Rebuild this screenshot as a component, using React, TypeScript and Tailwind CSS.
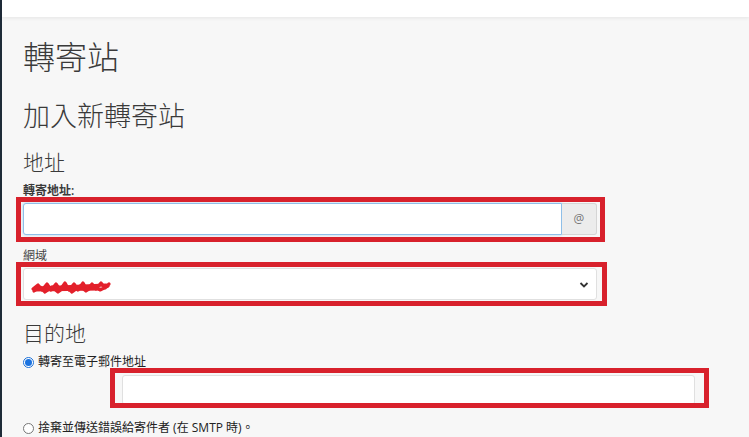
import React from "react";

const cjk = { fontFamily: '"Open Sans", "Noto Sans CJK TC", sans-serif' };

const RedBox = ({ className }: { className: string }) => (
  <div className={`pointer-events-none absolute border-[5px] border-[#d8212c] ${className}`} />
);

// redaction scribble over the domain value
const Scribble = () => (
  <svg width="82" height="16" viewBox="0 0 82 16" className="absolute left-[6px] top-[10px]">
    <path
      d="M3 10 L8 6 L12 11 L17 5 L21 11 L26 5 L30 11 L35 4 L39 11 L44 5 L48 11 L53 4 L57 11 L62 5 L66 10 L71 4 L75 9 L79 5 M4 12 L10 8 L15 13 L22 8 L28 13 L36 7 L42 13 L50 7 L56 12 L64 7 L70 11 L78 7"
      fill="none"
      stroke="#e3202b"
      strokeWidth="3.2"
      strokeLinecap="round"
      strokeLinejoin="round"
    />
    <path d="M6 9 L76 6 M5 11 L70 10" stroke="#e3202b" strokeWidth="3" strokeLinecap="round" />
  </svg>
);

const Radio = ({ checked }: { checked?: boolean }) =>
  checked ? (
    <span className="flex h-[11px] w-[11px] items-center justify-center rounded-full border border-[#1b6fd6] bg-white">
      <span className="h-[7px] w-[7px] rounded-full bg-[#1b73e0]" />
    </span>
  ) : (
    <span className="h-[11px] w-[11px] rounded-full border border-[#777] bg-white" />
  );

export default function App() {
  return (
    <div className="flex h-[437px] w-[749px] overflow-hidden bg-[#f7f7f7]" style={cjk}>
      <div className="w-[2px] shrink-0 bg-[#1e2b38]" />
      <div className="flex min-w-0 flex-1 flex-col">
        <div className="h-[17px] shrink-0 bg-white shadow-[0_1px_4px_rgba(0,0,0,0.08)]" />
        <div className="flex flex-col pl-[21px] text-[#333]">
          <h1 className="mt-[20px] text-[32px] font-light leading-[40px] text-[#3a3a3a]">轉寄站</h1>
          <h2 className="mt-[21px] text-[27px] font-light leading-[36px] text-[#3a3a3a]">加入新轉寄站</h2>
          <h3 className="mt-[14px] text-[21px] font-light leading-[28px] text-[#3a3a3a]">地址</h3>

          <label className="mt-[7px] text-[12px] font-semibold leading-[16px] text-[#3a3a3a]">轉寄地址:</label>
          <div className="relative mt-[4px] flex h-[32px] w-[574px]">
            <input
              className="h-full flex-1 rounded-l-[3px] border border-[#8fbfe8] bg-white px-2 text-[13px] shadow-[0_0_3px_rgba(102,175,233,0.5)] outline-none"
              readOnly
            />
            <span className="flex w-[35px] items-center justify-center rounded-r-[3px] border border-l-0 border-[#d5d5d5] bg-[#ececec] text-[12px] text-[#777]">
              @
            </span>
            <RedBox className="-left-[7px] -top-[6px] -right-[8px] -bottom-[7px]" />
          </div>

          <label className="mt-[13px] text-[12px] leading-[16px] text-[#444]">網域</label>
          <div className="relative mt-[4px] flex h-[32px] w-[574px] items-center rounded-[3px] border border-[#e0e0e0] bg-white">
            <Scribble />
            <svg width="10" height="8" viewBox="0 0 10 8" className="absolute right-[7px] top-[12px]">
              <path d="M1.5 2 L5 5.5 L8.5 2" fill="none" stroke="#333" strokeWidth="1.8" />
            </svg>
            <RedBox className="-left-[8px] -top-[7px] -right-[11px] -bottom-[7px]" />
          </div>

          <h3 className="mt-[19px] text-[21px] font-light leading-[28px] text-[#3a3a3a]">目的地</h3>

          <div className="mt-[6px] flex h-[18px] items-center gap-[4px] text-[12px] text-[#222]">
            <Radio checked />
            <span>轉寄至電子郵件地址</span>
          </div>
          <div className="relative ml-[99px] mt-[4px] h-[30px] w-[573px] rounded-[3px] border border-[#e0e0e0] bg-white">
            <RedBox className="-left-[13px] -top-[8px] -right-[15px] -bottom-[4px]" />
          </div>

          <div className="mt-[14px] flex h-[18px] items-center gap-[4px] text-[12px] text-[#222]">
            <Radio />
            <span>捨棄並傳送錯誤給寄件者 (在 SMTP 時)。</span>
          </div>
        </div>
      </div>
    </div>
  );
}
